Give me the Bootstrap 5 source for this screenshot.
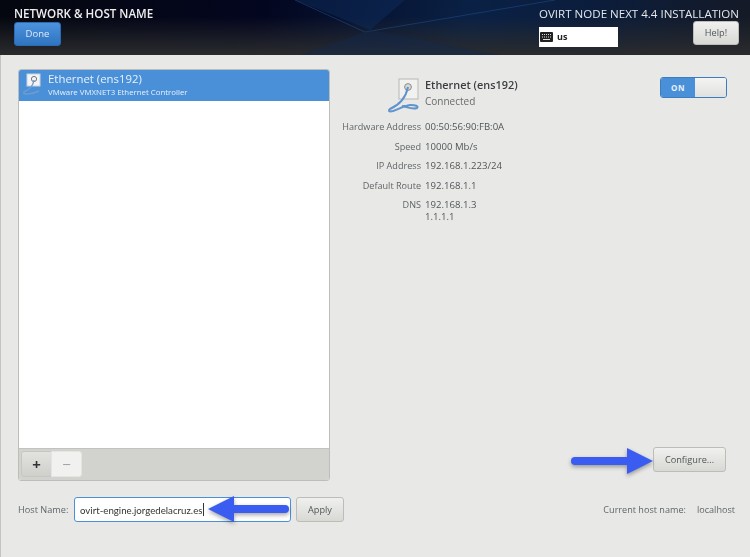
<!DOCTYPE html>
<html lang="en">
<head>
<meta charset="utf-8">
<title>Network &amp; Host Name</title>
<link href="https://cdn.jsdelivr.net/npm/bootstrap@5.3.0/dist/css/bootstrap.min.css" rel="stylesheet">
<style>
html,body{height:557px;overflow:hidden;margin:0}
body{background:#e8e8e7;font-family:"Open Sans","Noto Sans",sans-serif;font-size:10px;color:#2e3436}
.shell{width:750px;height:557px;position:relative;filter:blur(.45px);border-left:1px solid #c4c4c4}
.hdr{height:55px;margin-left:-1px;padding:7px 11px 0 14px;color:#eee;
 background:linear-gradient(180deg,rgba(30,30,32,0) 30%,#2a2b2d 100%),linear-gradient(100deg,#05070f 0%,#03061f 35%,#0a2145 62%,#0b1d3c 78%,#151a26 100%);position:relative;overflow:hidden}
.hdr-streak{position:absolute;left:200px;top:0;width:550px;height:55px;pointer-events:none}
.hdr-inner{position:relative}
.hdr-title{font-size:11.6px;font-weight:600;line-height:14px}
.hdr-title-r{font-size:11.55px;font-weight:400;line-height:14px;color:#e4e6ea;width:200px;white-space:nowrap}
.btn-done{width:47px;height:24px;padding:0;font-size:9.5px;color:#dfe9f5;background:linear-gradient(#4c92dd,#2f74c0);border:1px solid #2a6bb3;border-radius:3px;margin-top:1px}
.btn-grey{padding:0;font-size:9.2px;color:#4f5557;background:linear-gradient(#f0f0ee,#d8d8d5);border:1px solid #bcbcb9;border-radius:3px}
.btn-help{width:46px;height:24px;right:11px;top:21px}
.kbd-box{width:79px;height:20px;background:#fff;margin-top:6px;color:#222;font-size:9px;font-weight:700;padding-left:1px}
.content{height:502px;padding:14px 23px 0 17px}
.netlist{width:312px;height:412px;background:#fff;border:1px solid #bdbdb9;border-radius:3px;overflow:hidden;flex:none}
.netrow{height:31px;background:#4a90d9;color:#e9f1fa;padding-left:3px;flex:none}
.netname{font-size:11.4px;line-height:13px;margin-top:2px}
.netsub{font-size:7.85px;line-height:10px;margin-top:2px}
.nettool{height:32px;background:#d2d2cf;border-top:1px solid #c2c2be;padding:2px}
.toolbtn{width:31px;height:26px;padding:0;font-size:15px;line-height:1;border-radius:0;border:1px solid #c6c6c3;font-weight:700;color:#2e3436}
.toolbtn-on{background:linear-gradient(#e2e2df,#cfcfcc);border-radius:3px 0 0 3px}
.toolbtn-off{background:#f1f1f0;color:#a0a0a0;border-color:#e4e4e2;border-radius:0 3px 3px 0;margin-left:-1px;font-weight:400}
.detail{width:385px;margin-left:12px;position:relative;flex:none}
.det-head{height:45px;padding-top:9px}
.det-icon{width:34px;height:35px;margin-left:45px;flex:none}
.det-name{font-size:10.9px;font-weight:600;line-height:14px;color:#3a3f41}
.det-state{font-size:10px;line-height:14px;color:#666c6e;margin-top:2px}
.sw{width:67px;height:21px;border:1px solid #3e7cc0;border-radius:3px;overflow:hidden;margin-left:auto;margin-top:-1px}
.sw-on{width:34px;background:#4a90d9;color:#e8f1fb;font-size:8px;font-weight:700;line-height:19px;text-align:center;letter-spacing:.5px}
.sw-off{flex:1;background:linear-gradient(#f4f4f3,#e0e0de)}
.spec{margin-top:7px;line-height:12px;font-size:9.6px}
.spec-row{display:flex;margin-bottom:7.6px}
.spec-k{width:80px;margin-left:-1px;text-align:right;color:#5f6567;white-space:nowrap;flex:none;font-size:9.1px}
.spec-v{margin-left:4px;color:#4f5557}
.btn-cfg{width:73px;height:25px;position:absolute;right:1px;top:378px}
.hostrow{margin-top:16px;height:25px}
.host-lab{width:56px;color:#5f6567;font-size:9.2px;flex:none;padding-top:1px}
.host-wrap{width:217px;height:25px;flex:none}
.host-in{width:217px;height:25px;border:1px solid #4a90d9;border-radius:3px;background:#fff;font-family:Lato,sans-serif;font-size:9.7px;color:#333;padding:0 0 0 5px;box-shadow:none}
.host-in:focus{box-shadow:none;border-color:#4a90d9}
.caret-mark{position:absolute;left:129px;top:6px;width:1px;height:13px;background:#333}
.btn-apply{width:48px;height:25px;margin-left:5px}
.cur-host{margin-left:auto;font-size:9.1px;color:#5f6567;margin-right:-8px;white-space:nowrap}
.cur-host span{margin-left:11px}
.ann{position:absolute;pointer-events:none;filter:drop-shadow(0 2px 2px rgba(0,0,0,.35))}
.ann-a{left:570px;top:447px}
.ann-b{left:206px;top:496px}
</style>
</head>
<body>
<div class="shell">
  <header class="hdr">
    <svg class="hdr-streak" viewBox="0 0 550 55"><path d="M95 0 L205 0 L170 30 Z" fill="#0e2c5c" opacity=".5"/><path d="M95 0 L165 32 L355 0" fill="none" stroke="#1d4a86" stroke-width="1" opacity=".6"/><path d="M100 55 L170 30 L300 55 Z" fill="#11294e" opacity=".45"/></svg>
    <div class="hdr-inner d-flex justify-content-between">
      <div>
        <div class="hdr-title">NETWORK &amp; HOST NAME</div>
        <button type="button" class="btn btn-done">Done</button>
      </div>
      <div class="d-flex">
        <div>
          <div class="hdr-title-r">OVIRT NODE NEXT 4.4 INSTALLATION</div>
          <div class="kbd-box d-flex align-items-center gap-1">
            <svg width="13" height="10" viewBox="0 0 13 10"><rect width="13" height="10" rx="1" fill="#222"/><path d="M2 2.5h9M2 5h9" stroke="#ddd" stroke-dasharray="1 1"/><path d="M3 7.5h7" stroke="#ddd"/></svg>
            <span>us</span>
          </div>
        </div>
      </div>
    </div>
    <button type="button" class="btn btn-grey btn-help position-absolute">Help!</button>
  </header>
  <main class="content">
    <div class="d-flex">
      <section class="netlist d-flex flex-column">
        <div class="netrow d-flex gap-1">
          <svg width="22" height="30" viewBox="0 0 22 30" class="flex-none"><rect x="5" y="4" width="13" height="12" fill="#f2f4f6" stroke="#c8d2dc"/><circle cx="12" cy="9" r="2.6" fill="none" stroke="#777"/><path d="M12 10 C11 17 7 20 2 22 C0 25 8 25 17 21" fill="none" stroke="#6f9ccc" stroke-width="1.4"/></svg>
          <div>
            <div class="netname">Ethernet (ens192)</div>
            <div class="netsub">VMware VMXNET3 Ethernet Controller</div>
          </div>
        </div>
        <div class="flex-grow-1"></div>
        <div class="nettool d-flex">
          <button type="button" class="btn toolbtn toolbtn-on">+</button>
          <button type="button" class="btn toolbtn toolbtn-off">−</button>
        </div>
      </section>
      <section class="detail">
        <div class="det-head d-flex">
          <svg class="det-icon" viewBox="0 0 34 35"><rect x="12" y="1" width="19" height="20" fill="#f1f1f0" stroke="#b8b8b5"/><circle cx="21" cy="9" r="3.4" fill="#d8d8d6" stroke="#8d8d8b"/><path d="M21 9 C19 19 12 27 3 31 C1 33 2 34 6 33 C12 31 18 27 24 27 C28 27 32 28 30 30 C26 32 20 29 15 28" fill="none" stroke="#5f94cc" stroke-width="2"/></svg>
          <div class="ms-1">
            <div class="det-name">Ethernet (ens192)</div>
            <div class="det-state">Connected</div>
          </div>
          <div class="sw d-flex"><div class="sw-on">ON</div><div class="sw-off"></div></div>
        </div>
        <div class="spec">
          <div class="spec-row"><div class="spec-k">Hardware Address</div><div class="spec-v">00:50:56:90:FB:0A</div></div>
          <div class="spec-row"><div class="spec-k">Speed</div><div class="spec-v">10000 Mb/s</div></div>
          <div class="spec-row"><div class="spec-k">IP Address</div><div class="spec-v">192.168.1.223/24</div></div>
          <div class="spec-row"><div class="spec-k">Default Route</div><div class="spec-v">192.168.1.1</div></div>
          <div class="spec-row"><div class="spec-k">DNS</div><div class="spec-v">192.168.1.3<br>1.1.1.1</div></div>
        </div>
        <button type="button" class="btn btn-grey btn-cfg">Configure...</button>
      </section>
    </div>
    <div class="hostrow d-flex align-items-center">
      <label class="host-lab" for="hn">Host Name:</label>
      <div class="host-wrap position-relative">
        <input id="hn" class="form-control host-in" value="ovirt-engine.jorgedelacruz.es">
        <span class="caret-mark"></span>
      </div>
      <button type="button" class="btn btn-grey btn-apply">Apply</button>
      <div class="cur-host">Current host name:<span>localhost</span></div>
    </div>
  </main>
  <svg class="ann ann-a" width="84" height="28" viewBox="0 0 84 28"><path d="M4 14H58" stroke="#3a5cf0" stroke-width="8" stroke-linecap="round"/><path d="M56 1L82 14L56 27Z" fill="#3a5cf0"/></svg>
  <svg class="ann ann-b" width="84" height="28" viewBox="0 0 84 28"><path d="M78 13H24" stroke="#3a5cf0" stroke-width="8" stroke-linecap="round"/><path d="M27 0L1 13L27 26Z" fill="#3a5cf0"/></svg>
</div>
</body>
</html>
